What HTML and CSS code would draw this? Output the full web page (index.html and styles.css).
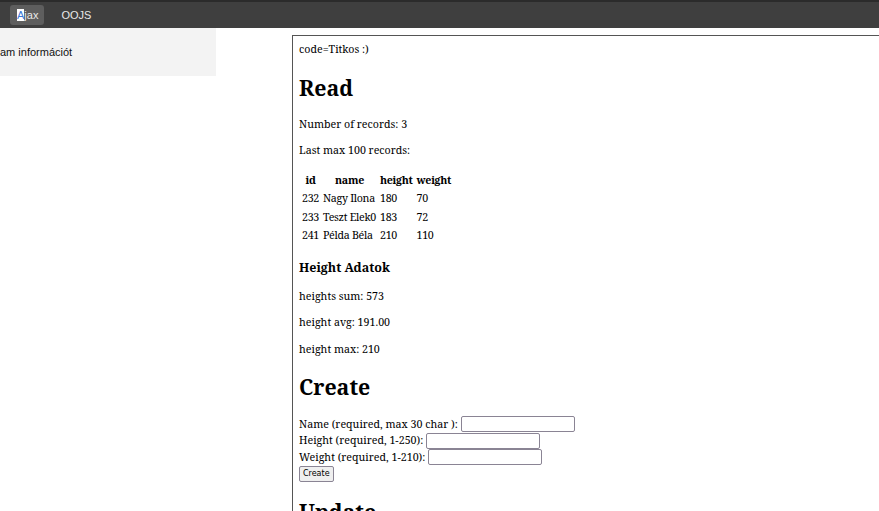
FILE: index.html
```html
<!DOCTYPE html>
<html lang="hu">
<head>
<meta charset="utf-8">
<title>Ajax</title>
<link rel="stylesheet" href="styles.css">
</head>
<body>
<nav class="topnav">
  <a class="navlink active"><span class="sel">A</span>jax</a>
  <a class="navlink">OOJS</a>
</nav>
<div class="layout">
  <aside class="sidebar">
    <span class="side-text">am információt</span>
  </aside>
  <main class="panel">
    <div class="code">code=Titkos :)</div>
    <h1>Read</h1>
    <p>Number of records: 3</p>
    <p>Last max 100 records:</p>
    <table class="records">
      <thead>
        <tr><th>id</th><th>name</th><th>height</th><th>weight</th></tr>
      </thead>
      <tbody>
        <tr><td>232</td><td>Nagy Ilona</td><td>180</td><td>70</td></tr>
        <tr><td>233</td><td>Teszt Elek0</td><td>183</td><td>72</td></tr>
        <tr><td>241</td><td>Példa Béla</td><td>210</td><td>110</td></tr>
      </tbody>
    </table>
    <h3>Height Adatok</h3>
    <p>heights sum: 573</p>
    <p>height avg: 191.00</p>
    <p>height max: 210</p>
    <h1>Create</h1>
    <form class="form">
      <label class="row">Name (required, max 30 char ):&nbsp;<input type="text"></label>
      <label class="row">Height (required, 1-250):&nbsp;<input type="text"></label>
      <label class="row">Weight (required, 1-210):&nbsp;<input type="text"></label>
      <div class="row btnrow"><button type="button" class="btn">Create</button></div>
    </form>
    <h1>Update</h1>
  </main>
</div>
</body>
</html>
```
FILE: styles.css
```css
html, body {
  margin: 0;
  padding: 0;
  overflow: hidden;
  background: #fff;
}
body {
  font-family: "Noto Serif", "DejaVu Serif", serif;
}
.topnav {
  display: flex;
  align-items: center;
  gap: 10px;
  height: 26px;
  padding: 0 0 0 10px;
  background: #3f3f3f;
  border-top: 2px solid #2b2b2b;
  font-family: "Liberation Sans", Arial, sans-serif;
  font-size: 11px;
}
.navlink {
  display: block;
  color: #e8e8e8;
  padding: 4px 6px 4px 7px;
  line-height: 12px;
  border-radius: 3px;
}
.navlink.active {
  background: #5e5e5e;
}
.sel {
  background: #fff;
  color: #3a78d8;
}
.layout {
  display: flex;
  align-items: flex-start;
}
.sidebar {
  flex: 0 0 216px;
  height: 48px;
  background: #f3f3f3;
  display: flex;
  align-items: center;
  font-family: "Liberation Sans", Arial, sans-serif;
  font-size: 11px;
  color: #111;
}
.panel {
  flex: 0 0 640px;
  margin: 7px 0 0 76px;
  padding: 6px;
  border: 1px solid #555;
  font-size: 10.67px;
  line-height: 15.5px;
  color: #000;
}
h1 {
  font-size: 21.33px;
  line-height: 29px;
  margin: 15px 0;
}
h3 {
  font-size: 12.5px;
  line-height: 17px;
  margin: 13px 0;
}
p {
  margin: 11px 0;
}
.records {
  border-spacing: 2px;
}
.records th, .records td {
  padding: 1px;
  line-height: 14.5px;
  letter-spacing: -0.3px;
  text-align: left;
}
.records th {
  text-align: center;
}
.form {
  display: flex;
  flex-direction: column;
  align-items: flex-start;
}
.row {
  display: flex;
  align-items: center;
  height: 16.5px;
}
.form input {
  box-sizing: border-box;
  width: 114px;
  height: 16px;
  padding: 1px 2px;
  margin: 0;
  border: 1px solid #8a8494;
  border-radius: 2px;
  font-size: 10px;
}
.btn {
  box-sizing: border-box;
  height: 16px;
  font-family: "DejaVu Sans", sans-serif;
  font-size: 8px;
  padding: 0 3px;
  border: 1px solid #8a8494;
  border-radius: 2px;
  background: #efefef;
  color: #000;
}
```
